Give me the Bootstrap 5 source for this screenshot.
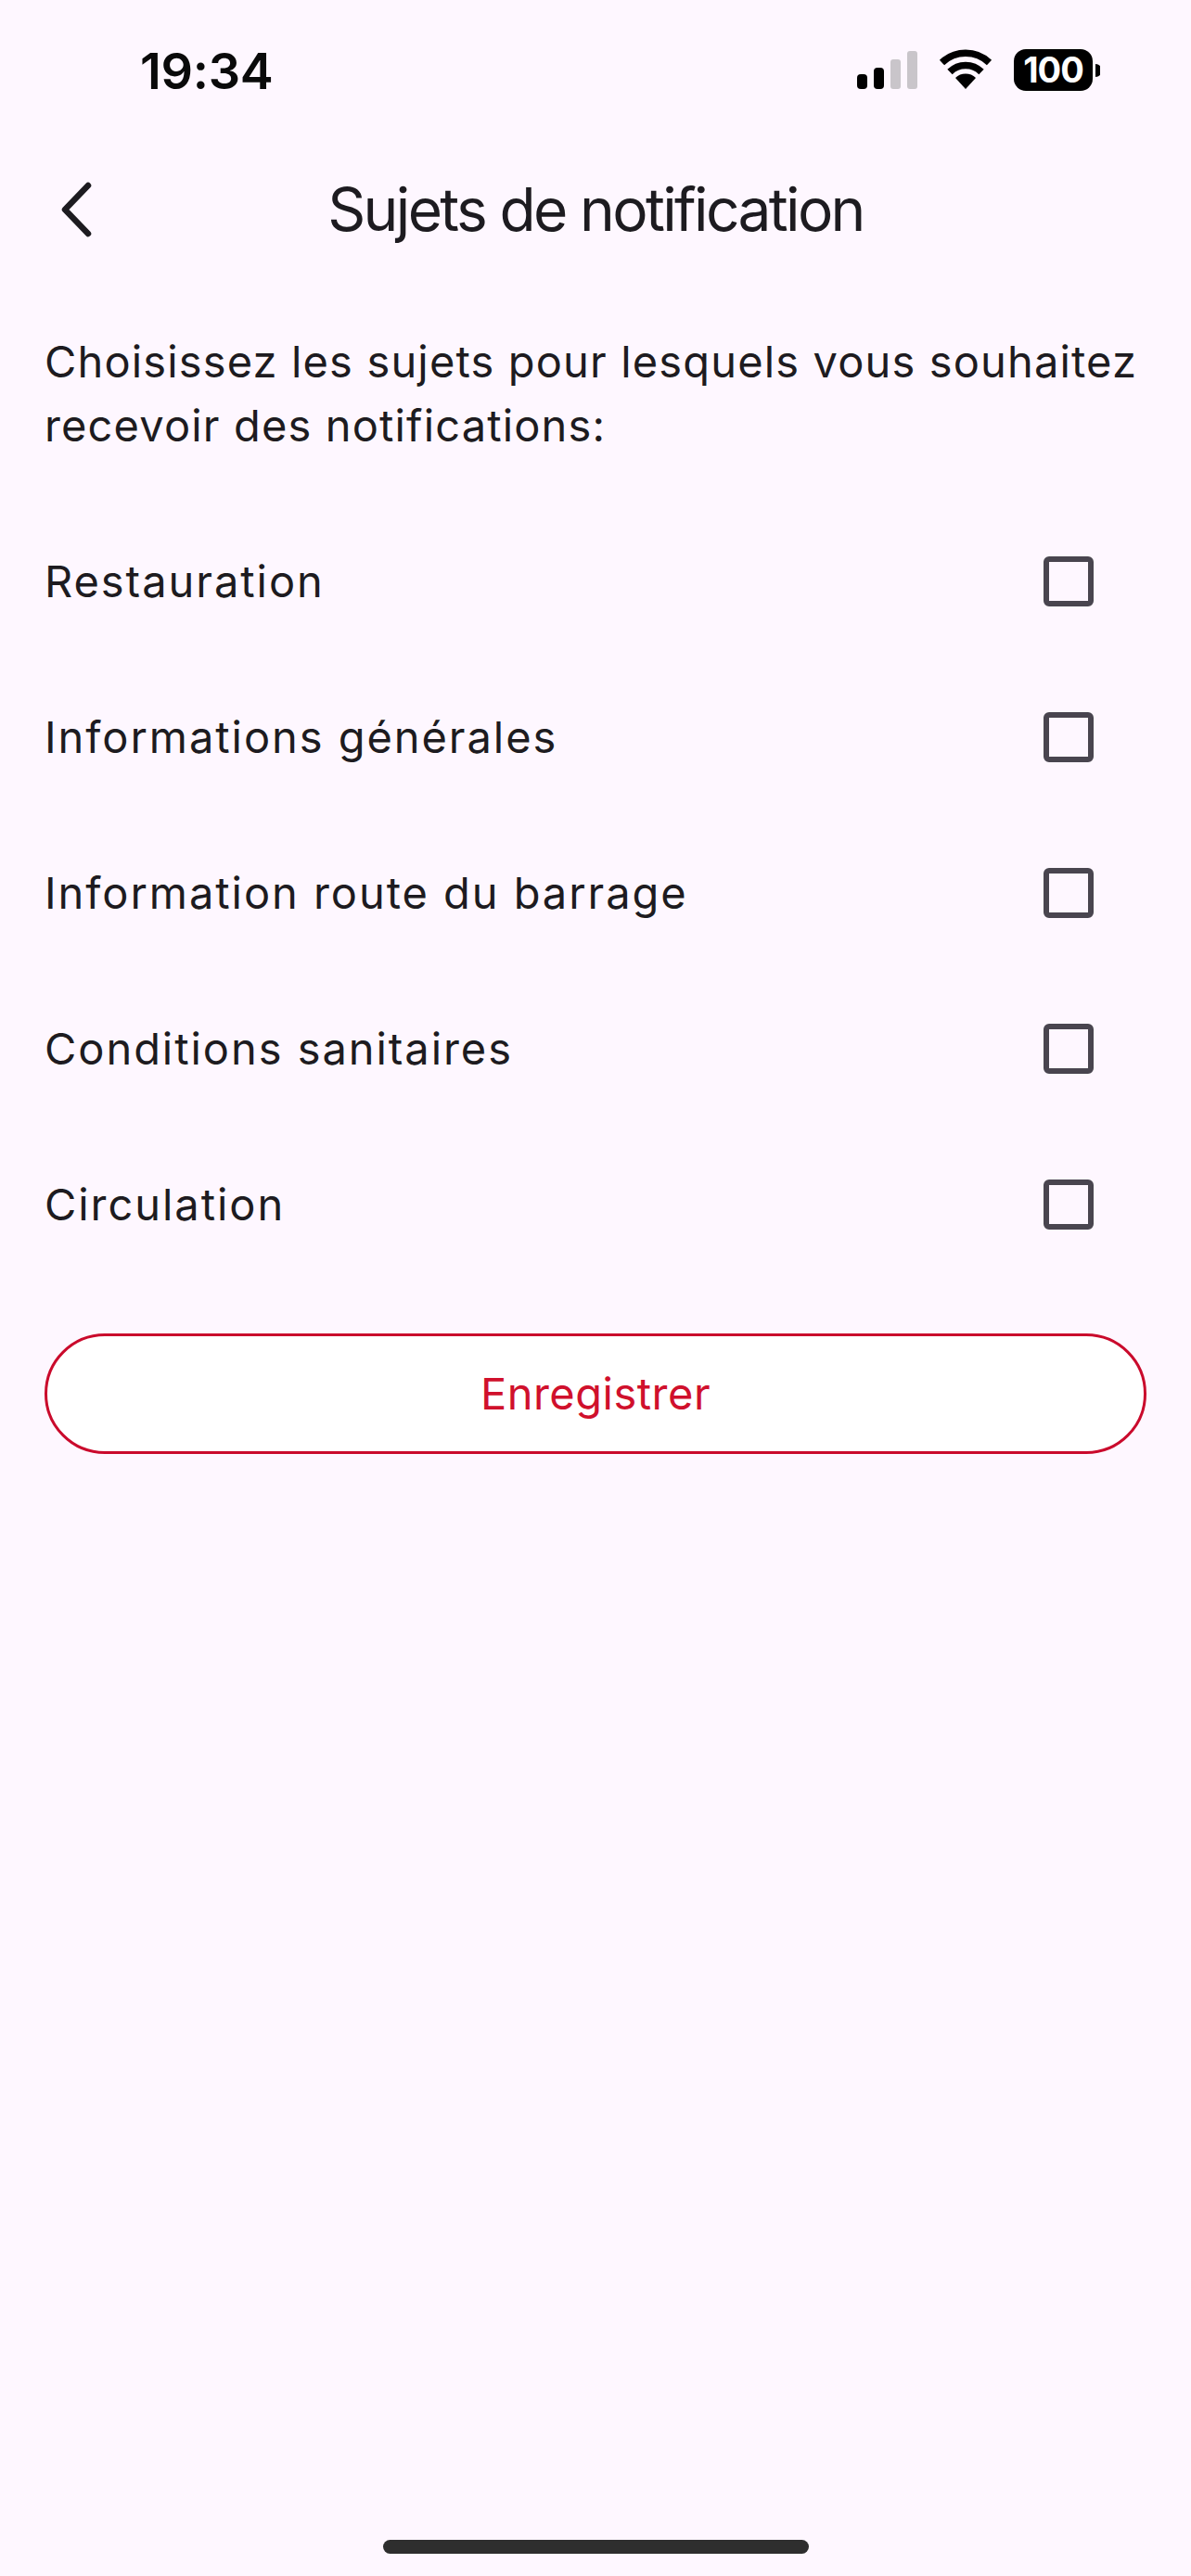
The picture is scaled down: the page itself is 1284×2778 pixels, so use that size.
<!DOCTYPE html>
<html lang="fr">
<head>
    <meta charset="UTF-8">
    <meta name="viewport" content="width=device-width, initial-scale=1.0">
    <title>Sujets de notification</title>
    <link href="https://cdn.jsdelivr.net/npm/bootstrap@5.3.0/dist/css/bootstrap.min.css" rel="stylesheet">
    <style>
        body {
            background: #fef7ff;
            color: #1d1b20;
            font-family: Inter, "Liberation Sans", sans-serif;
            height: 2778px;
            overflow: hidden;
        }
        .status-bar {
            height: 152px;
            padding: 50px 98px 0 151px;
        }
        .status-time {
            font-size: 54px;
            font-weight: 600;
            line-height: 54px;
            letter-spacing: -.3px;
            color: #0a0a0a;
        }
        .status-icons { gap: 23px; padding-top: 3px; }
        .battery {
            width: 85px;
            height: 45px;
            border-radius: 13px;
            background: #000;
            color: #fff;
            font-size: 38px;
            font-weight: 700;
            letter-spacing: -1px;
        }
        .battery-nub { margin-left: 3px; }
        .app-header {
            height: 148px;
            padding-left: 62px;
        }
        .back-btn { width: 40px; flex: none; }
        .app-title {
            font-size: 64px;
            line-height: 88px;
            letter-spacing: -2.65px;
            text-align: center;
            flex: 1;
            padding-right: 102px;
            margin: 0;
            font-weight: 400;
        }
        .intro-text {
            font-size: 47px;
            font-weight: 370;
            line-height: 69px;
            letter-spacing: 1.15px;
            padding: 0 48px;
            margin: 55px 0 50px;
        }
        .topic-row {
            height: 168px;
            padding: 0 105px 0 48px;
            font-size: 47px;
            font-weight: 370;
            letter-spacing: 1.95px;
        }
        .topic-box {
            width: 54px;
            height: 54px;
            border: 6px solid #49454f;
            border-radius: 6px;
        }
        .save-btn {
            display: block;
            width: 1188px;
            height: 130px;
            margin: 55px 0 0 48px;
            background: #fff;
            border: 3px solid #ca0a2c;
            border-radius: 65px;
            color: #d0102c;
            font-size: 47px;
            font-weight: 370;
            letter-spacing: .5px;
        }
        .home-bar {
            bottom: 24px;
            left: 413px;
            width: 459px;
            height: 15px;
            background: #2e2e2e;
        }
    </style>
</head>
<body class="position-relative">
    <div class="status-bar d-flex justify-content-between">
        <div class="status-time">19:34</div>
        <div class="status-icons d-flex align-items-start">
            <svg width="65" height="45" viewBox="0 0 65 45">
                <rect x="0" y="27" width="11" height="16" rx="4" fill="#000"/>
                <rect x="18" y="20" width="11" height="23" rx="4" fill="#000"/>
                <rect x="36" y="11" width="11" height="32" rx="3" fill="#c9c5ca"/>
                <rect x="54" y="2" width="11" height="41" rx="3" fill="#c9c5ca"/>
            </svg>
            <svg width="58" height="45" viewBox="0 0 58 45">
                <path d="M29 43 L18 31 A16 16 0 0 1 40 31 Z" fill="#000"/>
                <path d="M3.5 14.5 A37 37 0 0 1 54.5 14.5" fill="none" stroke="#000" stroke-width="7.5"/>
                <path d="M12 24.5 A24 24 0 0 1 46 24.5" fill="none" stroke="#000" stroke-width="7.5"/>
            </svg>
            <div class="d-flex align-items-center">
                <div class="battery d-flex align-items-center justify-content-center">100</div>
                <svg class="battery-nub" width="5" height="14" viewBox="0 0 5 14"><path d="M0 0 A7 7 0 0 1 0 14 Z" fill="#000"/></svg>
            </div>
        </div>
    </div>

    <div class="app-header d-flex align-items-center">
        <div class="back-btn">
            <svg width="40" height="60" viewBox="0 0 40 60">
                <path d="M33 4 L8 30 L33 56" fill="none" stroke="#1d1b20" stroke-width="6.5" stroke-linecap="round" stroke-linejoin="round"/>
            </svg>
        </div>
        <h1 class="app-title">Sujets de notification</h1>
    </div>

    <p class="intro-text">Choisissez les sujets pour lesquels vous souhaitez recevoir des notifications:</p>

    <div>
        <div class="topic-row d-flex align-items-center justify-content-between"><span>Restauration</span><div class="topic-box"></div></div>
        <div class="topic-row d-flex align-items-center justify-content-between"><span>Informations générales</span><div class="topic-box"></div></div>
        <div class="topic-row d-flex align-items-center justify-content-between"><span>Information route du barrage</span><div class="topic-box"></div></div>
        <div class="topic-row d-flex align-items-center justify-content-between"><span>Conditions sanitaires</span><div class="topic-box"></div></div>
        <div class="topic-row d-flex align-items-center justify-content-between"><span>Circulation</span><div class="topic-box"></div></div>
    </div>

    <button class="save-btn" type="button">Enregistrer</button>

    <div class="home-bar position-absolute rounded-pill"></div>

    <script src="https://cdn.jsdelivr.net/npm/bootstrap@5.3.0/dist/js/bootstrap.bundle.min.js"></script>
</body>
</html>
